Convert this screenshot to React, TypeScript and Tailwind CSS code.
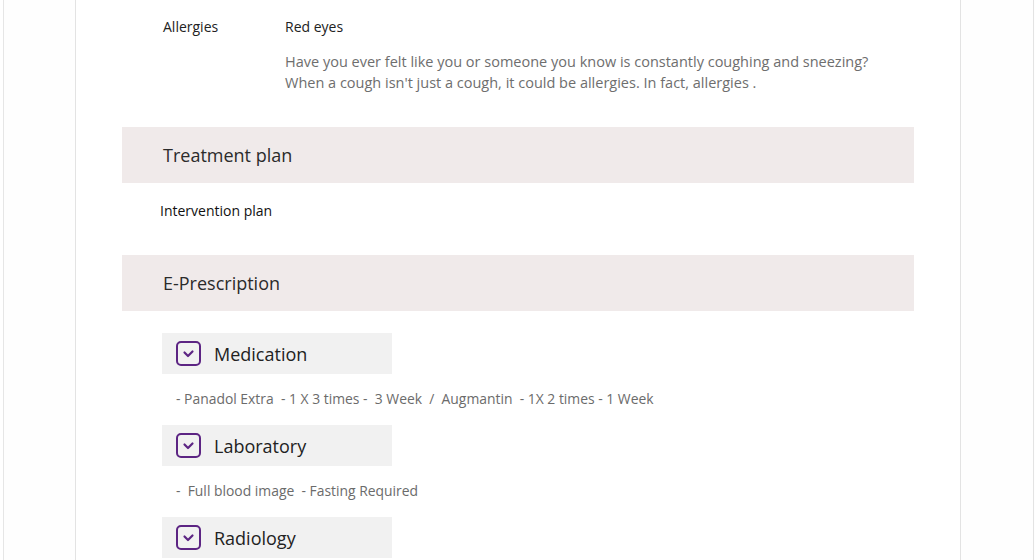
import React from 'react'

const font = { fontFamily: '"Open Sans", "Noto Sans", sans-serif' }

function CheckIcon() {
  return (
    <svg width="25" height="25" viewBox="0 0 25 25" className="shrink-0">
      <rect x="1" y="1" width="23" height="23" rx="4" fill="none" stroke="#5c2483" strokeWidth="2" />
      <path d="M8.5 11.5 L12 15 L16.5 10.5" fill="none" stroke="#5c2483" strokeWidth="2.2" strokeLinecap="round" strokeLinejoin="round" />
    </svg>
  )
}

function OrderBlock({ title, detail }: { title: string; detail?: string }) {
  return (
    <div>
      <div className="flex items-center gap-[13px] w-[230px] h-[41px] bg-[#f1f1f1] pl-[14px]">
        <CheckIcon />
        <span className="text-[18px] text-[#222] leading-none">{title}</span>
      </div>
      {detail && <div className="pl-[14px] pt-[15px] pb-[16px] text-[13.9px] text-[#6b6b6b] whitespace-pre leading-[20px]">{detail}</div>}
    </div>
  )
}

function SectionBar({ title }: { title: string }) {
  return (
    <div className="h-[56px] bg-[#f0eaea] flex items-center pl-[41px]">
      <span className="text-[18px] text-[#2b2b2b]">{title}</span>
    </div>
  )
}

export default function App() {
  return (
    <div style={font} className="w-[1035px] h-[560px] overflow-hidden bg-white flex">
      <div className="w-[3px] shrink-0" />
      <div className="flex-1 flex border-l border-[#e6e6e6] bg-[#fefefe]">
        <div className="w-[71px] shrink-0" />
        <div className="w-[886px] shrink-0 border-l border-r border-[#e3e3e3] bg-white">
          <div className="pl-[46px] pr-[46px]">
            <div className="flex pt-[17px] h-[127px]">
              <div className="w-[163px] pl-[41px] text-[14px] text-[#222] leading-[20px] shrink-0">Allergies</div>
              <div>
                <div className="text-[14px] text-[#222] leading-[20px]">Red eyes</div>
                <p className="mt-[14px] text-[14.5px] text-[#6e6e6e] leading-[21px]">
                  Have you ever felt like you or someone you know is constantly coughing and sneezing?
                  <br />
                  When a cough isn't just a cough, it could be allergies. In fact, allergies .
                </p>
              </div>
            </div>
            <SectionBar title="Treatment plan" />
            <div className="h-[72px] pl-[38px] pt-[18px] text-[14px] text-[#111] leading-[20px]">Intervention plan</div>
            <SectionBar title="E-Prescription" />
            <div className="pl-[40px] pt-[22px]">
              <OrderBlock title="Medication" detail="- Panadol Extra  - 1 X 3 times -  3 Week  /  Augmantin  - 1X 2 times - 1 Week" />
              <OrderBlock title="Laboratory" detail="-  Full blood image  - Fasting Required" />
              <OrderBlock title="Radiology" />
            </div>
          </div>
        </div>
        <div className="flex-1" />
        <div className="w-px bg-[#e3e3e3]" />
        <div className="w-px" />
      </div>
    </div>
  )
}
